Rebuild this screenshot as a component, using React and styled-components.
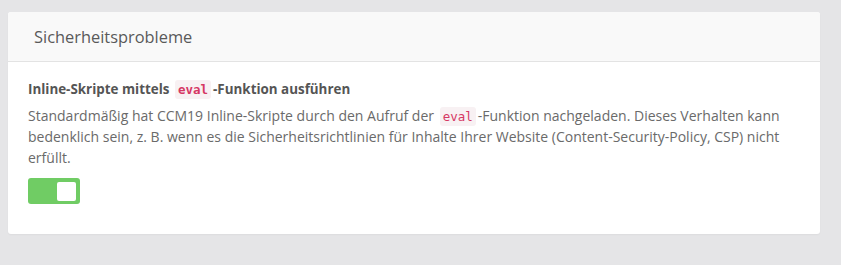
import React, { useState } from 'react';
import styled, { createGlobalStyle } from 'styled-components';

const GlobalStyle = createGlobalStyle`
  html, body {
    margin: 0;
    background: #e5e5e7;
  }
  body {
    padding: 12px 21px 30px 8px;
    font-family: 'Open Sans', Lato, sans-serif;
  }
`;

const Card = styled.section`
  background: #ffffff;
  border-radius: 3px;
  box-shadow: 0 1px 2px rgba(0, 0, 0, 0.04);
`;

const CardHeader = styled.header`
  height: 49px;
  display: flex;
  align-items: center;
  padding: 0 26px;
  background: #f9f9f9;
  border-bottom: 1px solid #e3e3e3;
  border-radius: 3px 3px 0 0;
`;

const CardTitle = styled.h2`
  margin: 0;
  font-size: 16.4px;
  font-weight: 400;
  color: #595959;
`;

const CardBody = styled.div`
  padding: 17px 20px 30px;
`;

const OptionTitle = styled.h3`
  margin: 0 0 6px;
  font-size: 13.4px;
  font-weight: 700;
  line-height: 20px;
  color: #555555;
`;

const Description = styled.p`
  margin: 0 0 10px;
  font-size: 14px;
  line-height: 21px;
  color: #6a6a6a;
`;

const Code = styled.code`
  font-family: 'DejaVu Sans Mono', 'Liberation Mono', monospace;
  font-size: 12.5px;
  line-height: 1;
  color: #d63864;
  background: #f8f1f3;
  border-radius: 3px;
  padding: 2px 3px;
  margin: 0 2px;
`;

const Toggle = styled.button`
  width: 52px;
  height: 26px;
  padding: 3px;
  border: none;
  border-radius: 3px;
  background: ${(p) => (p.$on ? '#70cc64' : '#cfcfcf')};
  display: flex;
  justify-content: ${(p) => (p.$on ? 'flex-end' : 'flex-start')};
  align-items: center;
  cursor: pointer;
`;

const Knob = styled.span`
  width: 19px;
  height: 19px;
  background: #ffffff;
  border-radius: 2px;
  margin-right: 1px;
`;

const App = () => {
  const [enabled, setEnabled] = useState(true);
  return (
    <>
      <GlobalStyle />
      <Card>
        <CardHeader>
          <CardTitle>Sicherheitsprobleme</CardTitle>
        </CardHeader>
        <CardBody>
          <OptionTitle>
            Inline-Skripte mittels <Code>eval</Code>-Funktion ausführen
          </OptionTitle>
          <Description>
            Standardmäßig hat CCM19 Inline-Skripte durch den Aufruf der{' '}
            <Code>eval</Code>-Funktion nachgeladen. Dieses Verhalten kann
            bedenklich sein, z. B. wenn es die Sicherheitsrichtlinien für
            Inhalte Ihrer Website (Content-Security-Policy, CSP) nicht erfüllt.
          </Description>
          <Toggle $on={enabled} onClick={() => setEnabled(!enabled)}>
            <Knob />
          </Toggle>
        </CardBody>
      </Card>
    </>
  );
};

export default App;
